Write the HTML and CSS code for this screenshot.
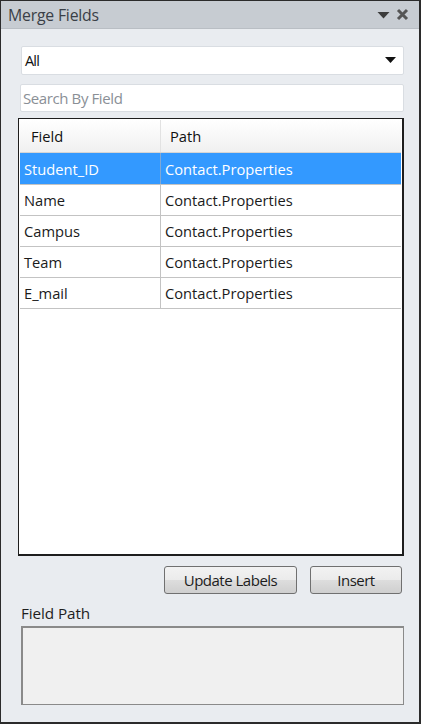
FILE: index.html
```html
<!DOCTYPE html>
<html>
<head>
<meta charset="utf-8">
<link rel="stylesheet" href="styles.css">
</head>
<body>
<div class="panel">
  <div class="titlebar">
    <span class="title">Merge Fields</span>
    <span class="title-icons">
      <svg width="13" height="8" viewBox="0 0 13 8"><path d="M0.5 1h12L6.5 7.5z" fill="#3c3c3c"/></svg>
      <svg width="13" height="13" viewBox="0 0 13 13"><path d="M2 2L11 11M11 2L2 11" stroke="#555" stroke-width="3"/></svg>
    </span>
  </div>
  <div class="content">
    <div class="select">
      <span>All</span>
      <svg width="11" height="7" viewBox="0 0 11 7"><path d="M0 0h11L5.5 6z" fill="#111"/></svg>
    </div>
    <div class="search">Search By Field</div>
    <div class="table">
      <div class="row head"><div class="c1">Field</div><div class="c2">Path</div></div>
      <div class="row sel"><div class="c1">Student_ID</div><div class="c2">Contact.Properties</div></div>
      <div class="row"><div class="c1">Name</div><div class="c2">Contact.Properties</div></div>
      <div class="row"><div class="c1">Campus</div><div class="c2">Contact.Properties</div></div>
      <div class="row"><div class="c1">Team</div><div class="c2">Contact.Properties</div></div>
      <div class="row"><div class="c1">E_mail</div><div class="c2">Contact.Properties</div></div>
    </div>
    <div class="buttons">
      <div class="btn btn-update">Update Labels</div>
      <div class="btn btn-insert">Insert</div>
    </div>
    <div class="label">Field Path</div>
    <div class="pathbox"></div>
  </div>
</div>
</body>
</html>
```
FILE: styles.css
```css
html, body { margin: 0; padding: 0; background: #fff; }
body { width: 421px; height: 724px; font-family: "Open Sans", "Noto Sans", sans-serif; }
.panel {
  box-sizing: border-box;
  width: 421px; height: 724px;
  border: 1px solid #2b2b2b;
  border-right-width: 2px;
  border-bottom-width: 2px;
  background: #e9ecf0;
  display: flex; flex-direction: column;
}
.titlebar {
  height: 27px;
  background: #c7ccd2;
  display: flex; align-items: center; justify-content: space-between;
  padding: 0 10px 0 7px;
  border-bottom: 1px solid #b9bec4;
}
.title { font-size: 15.8px; color: #3a3f47; letter-spacing: -0.2px; }
.title-icons { display: flex; align-items: center; gap: 6px; }
.content { padding: 17px 15px 0 17px; display: flex; flex-direction: column; }
.select {
  margin-left: 3px;
  height: 29px; box-sizing: border-box;
  background: #fff; border: 1px solid #d9dde2; border-radius: 2px;
  display: flex; align-items: center; justify-content: space-between;
  padding: 0 7px 0 3px;
  font-size: 14.5px; color: #111; letter-spacing: -0.8px;
}
.search {
  margin-left: 2px;
  margin-top: 9px;
  height: 28px; box-sizing: border-box;
  background: #fff; border: 1px solid #d9dde2; border-radius: 2px;
  display: flex; align-items: center;
  padding: 0 2px;
  font-size: 15px; color: #8a8f96; letter-spacing: -0.4px;
}
.table {
  margin-top: 6px;
  height: 438px; box-sizing: border-box;
  background: #fff;
  border: 1px solid #1e1e1e;
  border-width: 1px 2px 2px 1px;
  padding: 1px 0 0 1px;
  font-size: 14.7px;
}
.row { display: flex; height: 31px; box-sizing: border-box; border-bottom: 1px solid #c3c3c3; margin-right: 1px; }
.row .c1 { box-sizing: border-box; width: 141px; flex: none; border-right: 1px solid #c3c3c3; padding-left: 4px; display: flex; align-items: center; color: #1b1b1b; }
.row .c2 { flex: 1; padding-left: 4px; display: flex; align-items: center; color: #1b1b1b; }
.row.head { height: 33px; background: linear-gradient(#ffffff, #f0f0f0); border-bottom: 1px solid #d5d5d5; }
.row.head .c1 { border-right: 1px solid #e2e2e2; padding-left: 11px; color: #111; }
.row.head .c2 { padding-left: 9px; color: #111; }
.row.sel { background: #3399ff; height: 32px; }
.row.sel .c1, .row.sel .c2 { color: #fff; }
.row.sel .c1 { border-right-color: #7fa8d6; }
.buttons { display: flex; justify-content: flex-end; gap: 13px; margin-top: 10px; padding-right: 2px; }
.btn {
  height: 28px; box-sizing: border-box;
  border: 1px solid #707070; border-radius: 3px;
  background: linear-gradient(#f2f2f2 0%, #ebebeb 50%, #dddddd 51%, #cfcfcf 100%);
  display: flex; align-items: center; justify-content: center;
  font-size: 15px; color: #1c1c1c; letter-spacing: -0.5px;
}
.btn-update { width: 133px; }
.btn-insert { width: 92px; }
.label { margin-top: 9px; margin-left: 3px; font-size: 15.3px; color: #1e1e1e; letter-spacing: -0.1px; }
.pathbox {
  margin-top: 3px; margin-left: 3px;
  height: 79px; box-sizing: border-box;
  background: #f0f0f0; border: 1px solid #8a8a8a;
  border-width: 2px 1px 1px 2px;
}
```
